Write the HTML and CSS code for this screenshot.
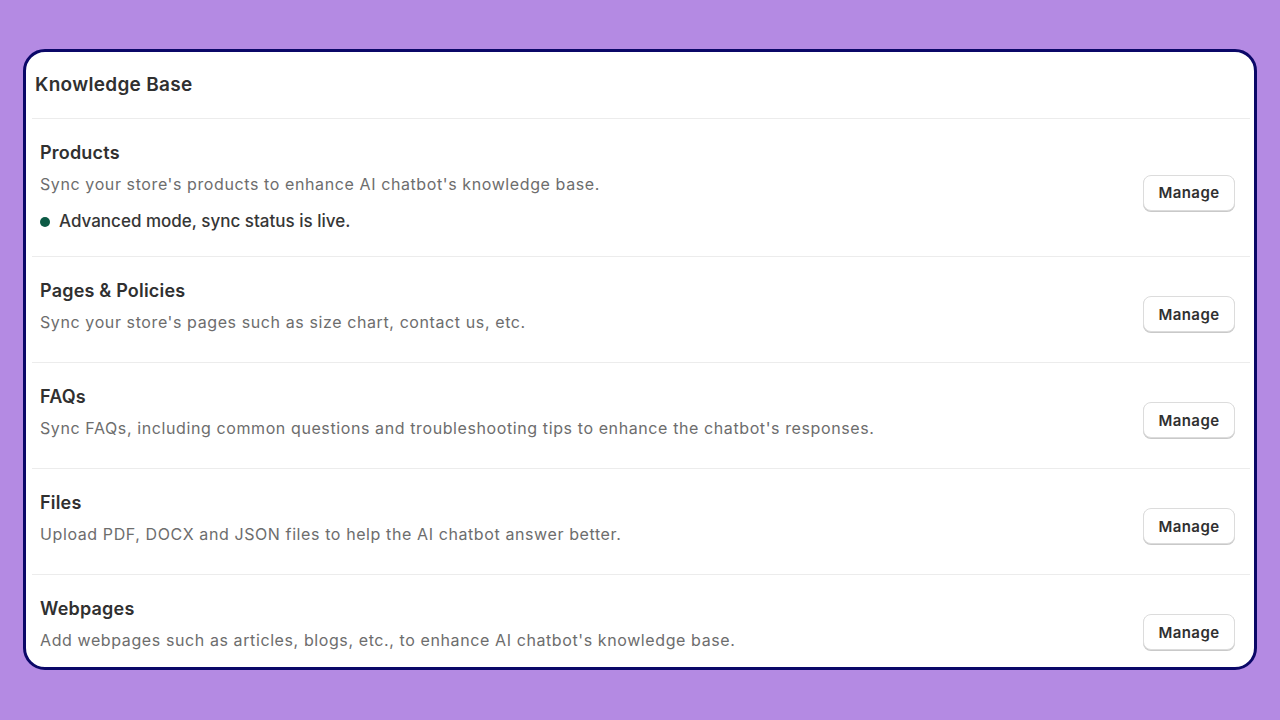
FILE: index.html
```html
<!DOCTYPE html>
<html>
<head>
  <title>Knowledge Base</title>
  <link rel="stylesheet" href="styles.css">
</head>
<body>
  <div class="card">
    <div class="card-inner">
      <h2 class="card-title">Knowledge Base</h2>

      <div class="source source-first">
        <div class="source-text">
          <div class="source-name">Products</div>
          <div class="source-desc">Sync your store's products to enhance AI chatbot's knowledge base.</div>
          <div class="source-status"><span class="dot"></span>Advanced mode, sync status is live.</div>
        </div>
        <button class="btn">Manage</button>
      </div>

      <div class="source">
        <div class="source-text">
          <div class="source-name">Pages &amp; Policies</div>
          <div class="source-desc">Sync your store's pages such as size chart, contact us, etc.</div>
        </div>
        <button class="btn">Manage</button>
      </div>

      <div class="source">
        <div class="source-text">
          <div class="source-name">FAQs</div>
          <div class="source-desc">Sync FAQs, including common questions and troubleshooting tips to enhance the chatbot's responses.</div>
        </div>
        <button class="btn">Manage</button>
      </div>

      <div class="source">
        <div class="source-text">
          <div class="source-name">Files</div>
          <div class="source-desc">Upload PDF, DOCX and JSON files to help the AI chatbot answer better.</div>
        </div>
        <button class="btn">Manage</button>
      </div>

      <div class="source">
        <div class="source-text">
          <div class="source-name">Webpages</div>
          <div class="source-desc">Add webpages such as articles, blogs, etc., to enhance AI chatbot's knowledge base.</div>
        </div>
        <button class="btn">Manage</button>
      </div>
    </div>
  </div>
</body>
</html>
```

FILE: styles.css
```css
body {
  margin: 0;
  padding: 49px 23px 0 23px;
  background: #b48ae3;
  font-family: Inter, "Noto Sans", sans-serif;
  color: #303030;
}

.card {
  box-sizing: border-box;
  height: 621px;
  background: #fff;
  border: 3px solid #0b0868;
  border-radius: 22px;
  overflow: hidden;
}

.card-inner {
  padding: 0 4px 0 6px;
}

.card-title {
  margin: 0;
  padding: 21px 3px 21px;
  font-size: 19px;
  line-height: 24px;
  font-weight: 600;
  letter-spacing: 0.3px;
}

.source {
  display: flex;
  align-items: center;
  justify-content: space-between;
  border-top: 1px solid #ececec;
  padding: 22px 15px 30px 8px;
}

.source-first {
  padding-bottom: 25px;
}

.source-first .btn {
  margin-top: 13px;
}

.source-name {
  font-size: 18px;
  line-height: 24px;
  font-weight: 600;
  letter-spacing: 0.2px;
}

.source-desc {
  margin-top: 9px;
  font-size: 16px;
  line-height: 20px;
  letter-spacing: 0.6px;
  color: #6d6d6d;
}

.source-status {
  display: flex;
  align-items: center;
  margin-top: 17px;
  font-size: 17px;
  line-height: 20px;
  font-weight: 500;
  color: #363636;
}

.dot {
  width: 10px;
  height: 10px;
  border-radius: 50%;
  background: #0c5a45;
  margin: 2px 9px 0 0;
}

.btn {
  margin-top: 17px;
  width: 92px;
  height: 36px;
  background: #fff;
  border: 1px solid #dcdcdc;
  border-radius: 8px;
  box-shadow: 0 1px 0 #c9c9c9;
  font-family: Inter, "Noto Sans", sans-serif;
  font-size: 15px;
  font-weight: 600;
  letter-spacing: 0.4px;
  color: #303030;
  cursor: pointer;
}
```
